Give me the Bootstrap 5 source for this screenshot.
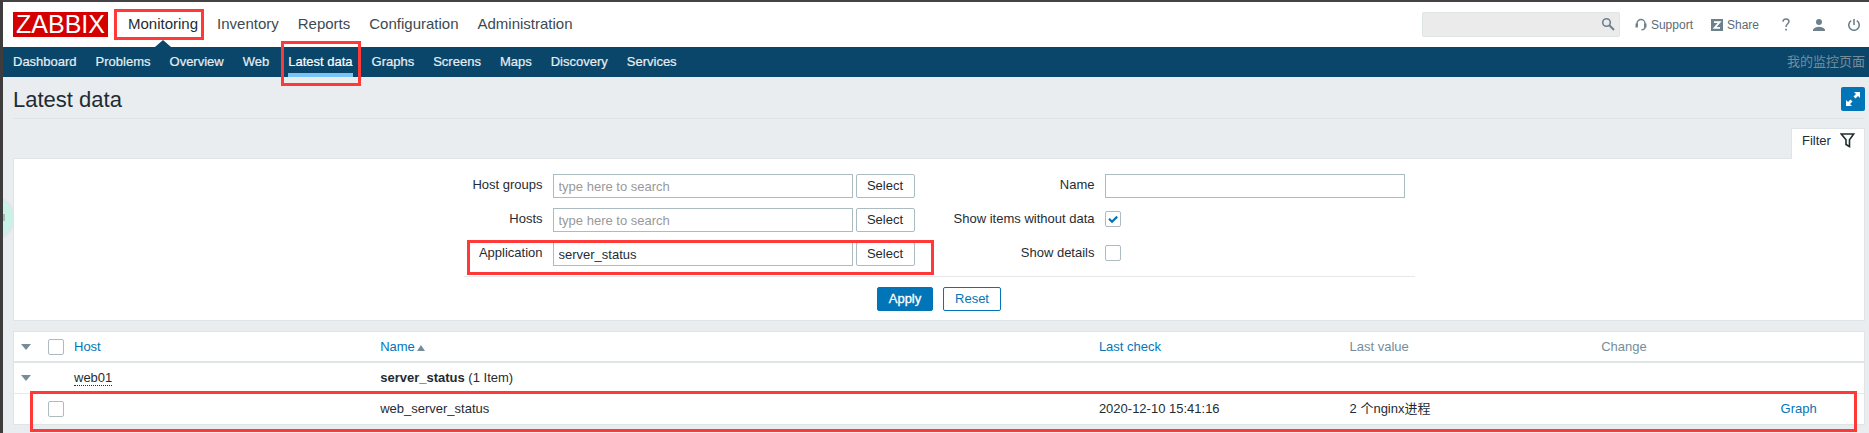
<!DOCTYPE html>
<html lang="en">
<head>
<meta charset="utf-8">
<meta name="viewport" content="width=device-width, initial-scale=1">
<title>Latest data</title>
<link href="https://cdn.jsdelivr.net/npm/bootstrap@5.3.0/dist/css/bootstrap.min.css" rel="stylesheet">
<style>
body{font-family:"Liberation Sans","Noto Sans CJK SC",sans-serif;font-size:13px;line-height:16px;color:#1f2c33;background:#e9edf0;border-left:3px solid #3f3c3e;border-top:2px solid #454244}
a{text-decoration:none;color:#0275b8}
.top-bar{height:45px;padding:0 4px 0 10px}
.logo{background:#d40000;color:#fff;font-size:25px;line-height:25px;width:95px;height:25px;text-align:center}
.logo:hover{color:#fff}
.main-menu{font-size:15px;gap:19px;margin-left:20px}
.main-menu a{color:#3c4a52;line-height:44px;height:45px;display:block}
.main-menu .current{color:#1f2c33;position:relative}
.main-menu .current::after{content:"";position:absolute;bottom:0;left:50%;margin-left:-8px;border:8px solid transparent;border-top:0;border-bottom:7px solid #0a466a}
.search-box{position:relative;width:198px;margin-right:15px}
.search-box input{width:100%;height:25px;background:#ebebeb;border:1px solid #dfe4e7;border-radius:2px;padding:0 28px 0 5px;display:block}
.search-box button{position:absolute;right:5px;top:5px;border:0;background:none;padding:0;line-height:0}
.top-links{font-size:12px;color:#5c6c75;gap:23px}
.top-links a{color:#5c6c75;display:flex;align-items:center;gap:4px}
.top-links a:first-child{margin-right:-5px}
.top-links a:last-child{margin-right:5px}
.top-links svg,.search-box svg{display:block}
.sub-bar{background:#0a466a;height:30px;padding:0 4px 0 10px}
.sub-menu{gap:19px}
.sub-menu a{color:#e6eef3;display:block;line-height:30px;height:30px;-webkit-text-stroke:.2px}
.sub-menu .current{color:#fff;box-shadow:inset 0 -4px #7ac3f5}
.user-name{color:#768d99}
.mark-box{position:absolute;border:3px solid #ff3838;pointer-events:none;z-index:2}
.mark-nav{inset:7px -6px 7px -14px}
.mark-sub{inset:-6px -8px -9px -7px}
.mark-field{inset:-2px -19px -9px 3px}
.mark-row{inset:59px 7px -8px 16px}
.page-body{padding:10px 4px 7px 10px}
.title-row{border-bottom:1px solid #dfe4e7;height:32px}
.title-row h1{font-size:22px;line-height:26px;margin:0;font-weight:400}
.btn-full{width:24px;height:24px;background:#0275b8;border:0;border-radius:2px;padding:0}
.btn-full svg{display:block;margin:auto}
.panel{background:#fff;border:1px solid #dfe4e7}
.filter-tab{background:#fff;border:1px solid #dfe4e7;border-bottom:0;height:31px;width:74px;margin:9px 0 -1px auto;position:relative;color:#1f2c33;padding:4px 9px 0 10px}
.filter-panel{padding:15px 0 9px}
.filter-form{max-width:951px;margin:0 auto}
.fields{border-bottom:1px solid #e6e9eb;height:103px}
.f-row{height:24px;margin-bottom:10px;position:relative;align-items:center}
.f-row label{text-align:right;padding:0 10px 2px 0}
.col-one label{width:89px}
.col-two label{width:190px}
.t-in{width:300px;height:24px;border:1px solid #acbbc2;padding:0 5px;color:#1f2c33;background:#fff}
.t-in::placeholder{color:#999;opacity:1}
.b-in{height:24px;min-width:59px;border:1px solid #acbbc2;border-radius:2px;background:#fff;color:#1f2c33;padding:0 10px;line-height:20px}
.t-in + .b-in{margin-left:3px}
.f-actions{gap:10px;padding-top:10px}
.b-apply{min-width:56px;background:#0275b8;border-color:#0275b8;color:#fff;-webkit-text-stroke:.3px}
.b-reset{min-width:58px;border-color:#0275b8;color:#0275b8}
.tick{appearance:none;width:16px;height:16px;border:1px solid #acbbc2;border-radius:2px;background:#fff;margin:0;display:block}
.f-row .tick{margin-bottom:2px}
.tick:checked{background:#fff url("data:image/svg+xml,%3Csvg xmlns='http://www.w3.org/2000/svg' viewBox='0 0 14 14'%3E%3Cpath d='M3 6.8 6 9.7 11.2 4.6' fill='none' stroke='%230275b8' stroke-width='2.2'/%3E%3C/svg%3E")}
.data-wrap{position:relative;margin-top:10px}
.data-grid{table-layout:fixed;width:100%;border-collapse:separate;border-spacing:0}
.data-grid th,.data-grid td{height:31px;padding:0;font-weight:400;vertical-align:middle;border-bottom:1px solid #e6e9eb}
.data-grid thead th{border-bottom:2px solid #dfe4e7;color:#768d99}
.data-grid tbody tr:last-child td{height:30px;border-bottom:0}
.data-grid td:first-child,.data-grid th:first-child{padding-left:7px}
.col-fold{width:34px}.col-tick{width:26px}.col-host{width:16.55%}.col-name{width:38.85%}.col-check{width:13.55%}.col-value{width:13.6%}.col-change{width:9.7%}
.fold{border:5px solid transparent;border-top:6px solid #768d99;border-bottom:0;padding:0;background:none;display:block;width:0}
.sort-up{display:inline-block;border:4px solid transparent;border-top:0;border-bottom:6px solid #768d99;margin-left:-1px}
.host-link{color:#1f2c33;border-bottom:1px dotted #1f2c33}
.side-tab{position:absolute;left:3px;top:198px;width:10px;height:40px;overflow:hidden}
.side-tab span{position:absolute;right:0;width:40px;height:40px;border-radius:50%;background:#c9f3e6;box-shadow:0 0 4px #ccd8d6}
.side-tab i{position:absolute;left:0;top:16px;width:2px;height:7px;background:#a9bdb9}
</style>
</head>
<body class="min-vh-100">
<header>
  <div class="top-bar bg-white d-flex align-items-center">
    <a class="logo" href="#">ZABBIX</a>
    <nav class="main-menu d-flex me-auto" aria-label="Main">
      <a class="current" href="#">Monitoring<span class="mark-box mark-nav"></span></a>
      <a href="#">Inventory</a><a href="#">Reports</a><a href="#">Configuration</a><a href="#">Administration</a>
    </nav>
    <form class="search-box">
      <input type="text" aria-label="Search">
      <button type="button" aria-label="Search"><svg width="14" height="14" viewBox="0 0 14 14" fill="none" stroke="#6c818c"><circle cx="5.5" cy="5.5" r="3.8" stroke-width="1.6"/><path d="M8.3 8.3 13 13" stroke-width="2"/></svg></button>
    </form>
    <div class="top-links d-flex align-items-center">
      <a href="#"><svg width="12" height="13" viewBox="0 0 12 13" fill="none" stroke="#6c818c"><path d="M2 8V5.5a4 4 0 0 1 8 0V9c0 2-1.2 2.7-3.5 2.8" stroke-width="1.4"/><path d="M1.7 5.5v4M10.3 5.5v4" stroke-width="2.4"/></svg>Support</a>
      <a href="#"><svg width="12" height="12" viewBox="0 0 12 12"><path fill="#6c818c" d="M0 0h12v12H0z"/><path d="M3 3.2h5.6L3.6 8.8H9" fill="none" stroke="#fff" stroke-width="1.8"/></svg>Share</a>
      <a href="#" aria-label="Help"><svg width="8" height="13" viewBox="0 0 8 13"><path d="M1 3.8C1 1.9 2.2.9 4 .9s3 1 3 2.7C7 5.7 4 6 4 8.9" fill="none" stroke="#6c818c" stroke-width="1.5"/><path fill="#6c818c" d="M3.2 10.7h1.7v1.8H3.2z"/></svg></a>
      <a href="#" aria-label="Profile"><svg width="12" height="12" viewBox="0 0 12 12" fill="#6c818c"><circle cx="6" cy="3" r="3"/><path d="M0 12v-1.6C1.2 8.6 3.5 7.8 6 7.8s4.8.8 6 2.6V12z"/></svg></a>
      <a href="#" aria-label="Sign out"><svg width="12" height="12" viewBox="0 0 12 12" fill="none" stroke="#6c818c" stroke-width="1.6"><path d="M3.2 1.7a5.2 5.2 0 1 0 5.6 0M6 0v6"/></svg></a>
    </div>
  </div>
  <div class="sub-bar d-flex justify-content-between">
    <nav class="sub-menu d-flex" aria-label="Monitoring">
      <a href="#">Dashboard</a><a href="#">Problems</a><a href="#">Overview</a><a href="#">Web</a>
      <a href="#" class="current position-relative">Latest data<span class="mark-box mark-sub"></span></a>
      <a href="#">Graphs</a><a href="#">Screens</a><a href="#">Maps</a><a href="#">Discovery</a><a href="#">Services</a>
    </nav>
    <span class="user-name align-self-center">我的监控页面</span>
  </div>
</header>
<div class="side-tab"><span></span><i></i></div>
<main class="page-body">
  <div class="title-row d-flex justify-content-between align-items-start">
    <h1>Latest data</h1>
    <button type="button" class="btn-full" aria-label="Fullscreen"><svg width="16" height="16" viewBox="0 0 16 16" fill="#fff"><path d="M9 1h6v6l-2-2-2.5 2.5-2-2L11 3zM1 15V9l2 2 2.5-2.5 2 2L5 13l2 2z"/></svg></button>
  </div>
  <a href="#" class="filter-tab d-flex justify-content-between align-items-start"><span>Filter</span><svg width="15" height="15" viewBox="0 0 15 15" fill="none" stroke="#1f2c33" stroke-width="1.6"><path d="M1.3 1h12.4L9.5 6.7v6.8l-3.5-2V6.7z"/></svg></a>
  <section class="panel filter-panel">
    <form class="filter-form">
      <div class="fields d-flex justify-content-between">
        <div class="col-one">
          <div class="f-row d-flex"><label for="g">Host groups</label><input id="g" class="t-in" placeholder="type here to search"><button type="button" class="b-in">Select</button></div>
          <div class="f-row d-flex"><label for="h">Hosts</label><input id="h" class="t-in" placeholder="type here to search"><button type="button" class="b-in">Select</button></div>
          <div class="f-row d-flex"><label for="a">Application</label><input id="a" class="t-in" value="server_status"><button type="button" class="b-in">Select</button><span class="mark-box mark-field"></span></div>
        </div>
        <div class="col-two pe-2 me-1">
          <div class="f-row d-flex"><label for="n">Name</label><input id="n" class="t-in"></div>
          <div class="f-row d-flex"><label for="w">Show items without data</label><input id="w" type="checkbox" class="tick" checked></div>
          <div class="f-row d-flex"><label for="d">Show details</label><input id="d" type="checkbox" class="tick"></div>
        </div>
      </div>
      <div class="f-actions d-flex justify-content-center"><button type="button" class="b-in b-apply">Apply</button><button type="button" class="b-in b-reset">Reset</button></div>
    </form>
  </section>
  <section class="panel data-wrap">
    <table class="data-grid">
      <colgroup><col class="col-fold"><col class="col-tick"><col class="col-host"><col class="col-name"><col class="col-check"><col class="col-value"><col class="col-change"><col></colgroup>
      <thead><tr><th><button type="button" class="fold" aria-label="Collapse all"></button></th><th><input type="checkbox" class="tick" aria-label="Select all"></th><th><a href="#">Host</a></th><th><a href="#">Name <span class="sort-up"></span></a></th><th><a href="#">Last check</a></th><th>Last value</th><th>Change</th><th></th></tr></thead>
      <tbody>
        <tr><td><button type="button" class="fold" aria-label="Collapse"></button></td><td></td><td><a href="#" class="host-link">web01</a></td><td colspan="5"><b>server_status</b> (1 Item)</td></tr>
        <tr><td></td><td><input type="checkbox" class="tick" aria-label="Select web_server_status"></td><td></td><td>web_server_status</td><td>2020-12-10 15:41:16</td><td>2 个nginx进程</td><td></td><td><a href="#">Graph</a></td></tr>
      </tbody>
    </table>
    <span class="mark-box mark-row"></span>
  </section>
</main>
<script src="https://cdn.jsdelivr.net/npm/bootstrap@5.3.0/dist/js/bootstrap.bundle.min.js"></script>
</body>
</html>
